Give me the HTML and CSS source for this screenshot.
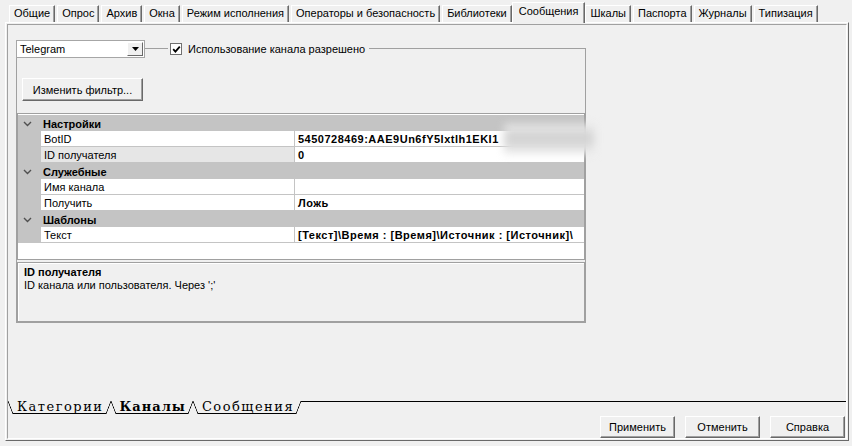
FILE: index.html
```html
<!DOCTYPE html>
<html lang="ru">
<head>
    <meta charset="UTF-8">
    <title>Сообщения</title>
    <link rel="stylesheet" href="styles.css">
</head>
<body>
    <div class="tabs">
        <div class="tab">Общие</div>
        <div class="tab">Опрос</div>
        <div class="tab">Архив</div>
        <div class="tab">Окна</div>
        <div class="tab">Режим исполнения</div>
        <div class="tab">Операторы и безопасность</div>
        <div class="tab">Библиотеки</div>
        <div class="tab active">Сообщения</div>
        <div class="tab">Шкалы</div>
        <div class="tab">Паспорта</div>
        <div class="tab">Журналы</div>
        <div class="tab">Типизация</div>
    </div>

    <div class="panel">
        <div class="page">
            <div class="channel">
                <div class="channel-head">
                    <div class="combo">
                        <span class="combo-text">Telegram</span>
                        <span class="combo-btn">
                            <svg width="7" height="4" viewBox="0 0 7 4"><path d="M0 0h7L3.5 4z" fill="#000"/></svg>
                        </span>
                    </div>
                    <div class="head-line"></div>
                    <label class="check-label">
                        <span class="check">
                            <svg width="9" height="9" viewBox="0 0 9 9"><path d="M1.2 4.2L3.4 6.6L7.8 1.6" stroke="#000" stroke-width="1.8" fill="none"/></svg>
                        </span>
                        Использование канала разрешено
                    </label>
                    <div class="head-rest"></div>
                </div>

                <div class="channel-body">
                    <button class="btn filter-btn">Изменить фильтр...</button>

                    <div class="grid">
                        <div class="cat">
                            <span class="cat-icon"><svg width="9" height="6" viewBox="0 0 9 6"><path d="M1 1l3.5 3.5L8 1" stroke="#505050" stroke-width="1.4" fill="none"/></svg></span>
                            Настройки
                        </div>
                        <div class="row">
                            <div class="gutter"></div>
                            <div class="label">BotID</div>
                            <div class="value">5450728469:AAE9Un6fY5lxtlh1EKI1</div>
                        </div>
                        <div class="row selected">
                            <div class="gutter"></div>
                            <div class="label">ID получателя</div>
                            <div class="value">0</div>
                        </div>
                        <div class="cat">
                            <span class="cat-icon"><svg width="9" height="6" viewBox="0 0 9 6"><path d="M1 1l3.5 3.5L8 1" stroke="#505050" stroke-width="1.4" fill="none"/></svg></span>
                            Служебные
                        </div>
                        <div class="row">
                            <div class="gutter"></div>
                            <div class="label">Имя канала</div>
                            <div class="value"></div>
                        </div>
                        <div class="row">
                            <div class="gutter"></div>
                            <div class="label">Получить</div>
                            <div class="value">Ложь</div>
                        </div>
                        <div class="cat">
                            <span class="cat-icon"><svg width="9" height="6" viewBox="0 0 9 6"><path d="M1 1l3.5 3.5L8 1" stroke="#505050" stroke-width="1.4" fill="none"/></svg></span>
                            Шаблоны
                        </div>
                        <div class="row">
                            <div class="gutter"></div>
                            <div class="label">Текст</div>
                            <div class="value">[Текст]\Время : [Время]\Источник : [Источник]\</div>
                        </div>
                        <div class="blur"></div>
                    </div>

                    <div class="help">
                        <div class="help-title">ID получателя</div>
                        <div>ID канала или пользователя. Через ';'</div>
                    </div>
                </div>
            </div>

            <div class="spacer"></div>

            <div class="sheets">
                <div class="sheet"><span>Категории</span></div>
                <div class="sheet active"><span>Каналы</span></div>
                <div class="sheet"><span>Сообщения</span></div>
                <div class="sheets-line"></div>
            </div>

            <div class="actions">
                <button class="btn">Применить</button>
                <button class="btn">Отменить</button>
                <button class="btn">Справка</button>
            </div>
        </div>
    </div>
</body>
</html>
```

FILE: styles.css
```css
:root {
    --face: #f0f0f0;
    --shadow: #a0a0a0;
    --dark: #696969;
    --cat-color: #c4c4c4;
}

body {
    margin: 0;
    width: 852px;
    height: 446px;
    overflow: hidden;
    background: var(--face);
    font-family: "Liberation Sans", Arial, sans-serif;
    font-size: 11px;
    color: #000;
}

/* top tabs */
.tabs {
    display: flex;
    align-items: flex-end;
    height: 22px;
    padding-left: 9px;
}

.tab {
    box-sizing: border-box;
    height: 17px;
    line-height: 15px;
    padding: 0 4px;
    margin-right: 2px;
    border: 1px solid;
    border-bottom: none;
    border-color: #fff var(--dark) transparent #fff;
    box-shadow: inset -1px 0 var(--shadow);
    white-space: nowrap;
}

.tab.active {
    position: relative;
    z-index: 1;
    height: 21px;
    line-height: 16px;
    margin: 0 0 -1px -2px;
    padding: 0 6px;
    background: var(--face);
}

/* tab panel */
.panel {
    box-sizing: border-box;
    height: 419px;
    margin: 0 3px 0 5px;
    border: 1px solid;
    border-color: #fff var(--dark) var(--dark) #fff;
    display: flex;
}

.page {
    flex: 1;
    margin: 1px;
    border: 1px solid;
    border-color: var(--shadow) #fff #fff var(--shadow);
    display: flex;
    flex-direction: column;
}

/* channel group box */
.channel {
    width: 570px;
    margin: 15px 0 0 8px;
}

.channel-head {
    display: flex;
    height: 18px;
}

.combo {
    box-sizing: border-box;
    width: 129px;
    height: 18px;
    display: flex;
    background: #fff;
    border: 1px solid #a6a6a6;
}

.combo-text {
    flex: 1;
    padding-left: 3px;
    line-height: 16px;
}

.combo-btn {
    box-sizing: border-box;
    width: 16px;
    margin: 1px;
    display: flex;
    align-items: center;
    justify-content: center;
    background: var(--face);
    border: 1px solid;
    border-color: #fff var(--dark) var(--dark) #fff;
}

.head-line {
    width: 23px;
    margin-top: 8px;
    border-top: 1px solid var(--shadow);
}

.check-label {
    display: flex;
    align-items: center;
    gap: 6px;
    padding: 0 4px 0 2px;
}

.check {
    box-sizing: border-box;
    width: 12px;
    height: 12px;
    display: flex;
    align-items: center;
    justify-content: center;
    background: #fff;
    border: 1px solid #707070;
}

.head-rest {
    flex: 1;
    margin-top: 8px;
    border-top: 1px solid var(--shadow);
    border-right: 1px solid var(--shadow);
}

.channel-body {
    box-sizing: border-box;
    height: 265px;
    border: 1px solid var(--shadow);
    border-top: none;
    display: flex;
    flex-direction: column;
    align-items: flex-start;
}

.btn {
    box-sizing: border-box;
    width: 75px;
    height: 22px;
    padding: 0;
    font-family: "Liberation Sans", Arial, sans-serif;
    font-size: 11px;
    color: #000;
    background: var(--face);
    border: 1px solid;
    border-color: #fff var(--dark) var(--dark) #fff;
    box-shadow: inset -1px -1px var(--shadow);
}

.filter-btn {
    width: 121px;
    height: 23px;
    margin: 20px 0 0 5px;
}

/* property grid */
.grid {
    position: relative;
    box-sizing: border-box;
    width: 100%;
    height: 147px;
    margin-top: 12px;
    padding-top: 1px;
    background: #fff;
    border: 1px solid var(--shadow);
}

.cat {
    display: flex;
    align-items: center;
    height: 16px;
    padding-top: 1px;
    box-sizing: border-box;
    background: var(--cat-color);
    font-weight: bold;
}

.cat-icon {
    width: 25px;
    padding-left: 5px;
    box-sizing: border-box;
    display: flex;
}

.row {
    display: flex;
    height: 16px;
}

.gutter {
    width: 23px;
    background: var(--cat-color);
}

.label,
.value {
    box-sizing: border-box;
    padding-top: 1px;
    line-height: 15px;
    border-bottom: 1px solid var(--cat-color);
    white-space: nowrap;
    overflow: hidden;
}

.label {
    width: 253px;
    padding-left: 3px;
}

.value {
    flex: 1;
    padding-left: 3px;
    border-left: 1px solid var(--cat-color);
    font-weight: bold;
    letter-spacing: 0.5px;
}

.selected .label {
    background: #e6e6e6;
}

.blur {
    position: absolute;
    left: 486px;
    top: 10px;
    width: 90px;
    height: 30px;
    background: linear-gradient(to bottom, #ededed, #cfcfcf 45%, #d6d6d6 60%, #eeeeee);
    filter: blur(4px);
}

.help {
    box-sizing: border-box;
    width: 100%;
    height: 60px;
    margin-top: 2px;
    padding: 3px 6px;
    line-height: 13px;
    border: 1px solid var(--shadow);
    box-shadow: inset 1px 1px #fff;
}

.help-title {
    font-weight: bold;
}

.spacer {
    flex: 1;
}

/* bottom sheet tabs */
.sheets {
    display: flex;
    height: 13px;
}

.sheet {
    position: relative;
    padding: 0 5px;
    font-family: "DejaVu Serif", "Liberation Serif", serif;
    font-size: 13px;
    letter-spacing: 1.5px;
    line-height: 12px;
}

.sheet span {
    display: block;
    height: 13px;
    box-sizing: border-box;
    padding: 0 2px 0 4px;
    border-bottom: 1px solid #000;
}

.sheet::before,
.sheet::after {
    content: "";
    position: absolute;
    top: 0;
    width: 5px;
    height: 13px;
}

.sheet::before {
    left: 0;
    background: linear-gradient(to top right, transparent calc(50% - 0.7px), #000 50%, transparent calc(50% + 0.7px));
}

.sheet::after {
    right: 0;
    background: linear-gradient(to top left, transparent calc(50% - 0.7px), #000 50%, transparent calc(50% + 0.7px));
}

.sheet.active {
    font-weight: bold;
    letter-spacing: 1px;
}

.sheets-line {
    flex: 1;
    border-top: 1px solid #000;
}

.actions {
    display: flex;
    justify-content: flex-end;
    gap: 10px;
    height: 22px;
    margin-top: 2px;
    padding-right: 1px;
}
```
